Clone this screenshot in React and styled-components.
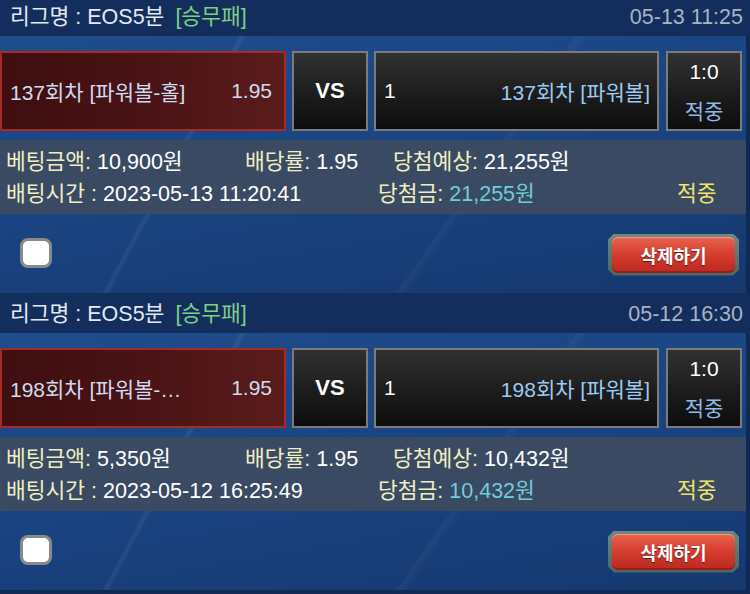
import React from "react";
import styled, { createGlobalStyle } from "styled-components";

const GlobalStyle = createGlobalStyle`
  body {
    margin: 0;
    background: #102a55;
    font-family: "Liberation Sans", "Noto Sans CJK KR", sans-serif;
    overflow: hidden;
  }
`;

const bets = [
  {
    id: 1,
    date: "05-13 11:25",
    pick: "137회차 [파워볼-홀]",
    odds: "1.95",
    home: "1",
    away: "137회차 [파워볼]",
    score: "1:0",
    amount: "10,900원",
    expected: "21,255원",
    time: "2023-05-13 11:20:41",
    won: "21,255원",
  },
  {
    id: 2,
    date: "05-12 16:30",
    pick: "198회차 [파워볼-…",
    odds: "1.95",
    home: "1",
    away: "198회차 [파워볼]",
    score: "1:0",
    amount: "5,350원",
    expected: "10,432원",
    time: "2023-05-12 16:25:49",
    won: "10,432원",
  },
];

export default function App() {
  return (
    <Page>
      <GlobalStyle />
      {bets.map((bet) => (
        <BetCard key={bet.id}>
          <Header>
            <League>
              리그명 : EOS5분 <GameType>[승무패]</GameType>
            </League>
            <DateText>{bet.date}</DateText>
          </Header>
          <Body>
            <MatchRow>
              <PickBox>
                <span>{bet.pick}</span>
                <span>{bet.odds}</span>
              </PickBox>
              <VsBox>VS</VsBox>
              <TeamBox>
                <span>{bet.home}</span>
                <AwayName>{bet.away}</AwayName>
              </TeamBox>
              <ScoreBox>
                <ScoreLine>{bet.score}</ScoreLine>
                <ScoreLine $result>적중</ScoreLine>
              </ScoreBox>
            </MatchRow>
            <InfoPanel>
              <InfoRow>
                <Cell $w={239}>
                  <Label>베팅금액:</Label> {bet.amount}
                </Cell>
                <Cell $w={148}>
                  <Label>배당률:</Label> {bet.odds}
                </Cell>
                <Cell>
                  <Label>당첨예상:</Label> {bet.expected}
                </Cell>
              </InfoRow>
              <InfoRow>
                <Cell $w={372}>
                  <Label>배팅시간 :</Label> {bet.time}
                </Cell>
                <Cell $w={299}>
                  <Label>당첨금:</Label> <WonValue>{bet.won}</WonValue>
                </Cell>
                <Cell>
                  <HitText>적중</HitText>
                </Cell>
              </InfoRow>
            </InfoPanel>
            <Footer>
              <CheckBox type="checkbox" />
              <DeleteFrame>
                <DeleteButton>삭제하기</DeleteButton>
              </DeleteFrame>
            </Footer>
          </Body>
        </BetCard>
      ))}
    </Page>
  );
}

const Page = styled.div`
  margin-top: -4px;
`;

const BetCard = styled.section`
  display: flex;
  flex-direction: column;
`;

const Header = styled.div`
  height: 40px;
  box-sizing: border-box;
  display: flex;
  align-items: flex-end;
  justify-content: space-between;
  padding: 0 7px 7px 10px;
  background: #132e5d;
  font-size: 21.5px;
  line-height: 24px;
`;

const League = styled.div`
  color: #e4e9f2;
`;

const GameType = styled.span`
  color: #7fcf83;
  margin-left: 5px;
`;

const DateText = styled.div`
  color: #a9b3c4;
`;

const Body = styled.div`
  width: 746px;
  padding-top: 15px;
  background:
    linear-gradient(118deg, transparent 27%, rgba(255, 255, 255, 0.07) 27.4%, transparent 28%),
    linear-gradient(125deg, transparent 62%, rgba(255, 255, 255, 0.04) 62.5%, transparent 63.5%),
    linear-gradient(170deg, #1f4c8c 0%, #1a4482 45%, #16386f 100%);
`;

const MatchRow = styled.div`
  display: flex;
  height: 80px;
  font-size: 21px;
`;

const PickBox = styled.div`
  width: 286px;
  box-sizing: border-box;
  display: flex;
  align-items: center;
  justify-content: space-between;
  padding: 0 12px 0 8px;
  border: 2px solid #a82a25;
  background: linear-gradient(90deg, #3e0e10 0%, #4a1315 50%, #5b1c1b 100%);
  color: #cfdbef;
  white-space: nowrap;
`;

const DarkBox = styled.div`
  box-sizing: border-box;
  border: 2px solid #7b7b7b;
  background: linear-gradient(180deg, #313131 0%, #1c1c1c 55%, #0d0d0d 100%);
  color: #ffffff;
`;

const VsBox = styled(DarkBox)`
  width: 76px;
  margin-left: 6px;
  display: flex;
  align-items: center;
  justify-content: center;
  font-weight: bold;
  font-size: 22px;
`;

const TeamBox = styled(DarkBox)`
  width: 285px;
  margin-left: 6px;
  display: flex;
  align-items: center;
  justify-content: space-between;
  padding: 0 7px 0 8px;
  white-space: nowrap;
`;

const AwayName = styled.span`
  color: #9ccaf2;
`;

const ScoreBox = styled(DarkBox)`
  width: 76px;
  margin-left: 7px;
  display: flex;
  flex-direction: column;
`;

const ScoreLine = styled.div`
  flex: 1;
  display: flex;
  align-items: center;
  justify-content: center;
  color: ${(p) => (p.$result ? "#8cbbe8" : "#ffffff")};
`;

const InfoPanel = styled.div`
  margin-top: 9px;
  height: 74px;
  box-sizing: border-box;
  padding: 3px 0 0 6px;
  background: #3a4a63;
  font-size: 21.5px;
  color: #ffffff;
`;

const InfoRow = styled.div`
  display: flex;
  height: 32px;
  align-items: center;
  white-space: nowrap;
`;

const Cell = styled.div`
  width: ${(p) => (p.$w ? `${p.$w}px` : "auto")};
  flex-shrink: 0;
`;

const Label = styled.span`
  color: #efeec2;
`;

const WonValue = styled.span`
  color: #72cbd9;
`;

const HitText = styled.span`
  color: #f1e46b;
`;

const Footer = styled.div`
  height: 79px;
  display: flex;
  align-items: center;
  justify-content: space-between;
  padding: 0 7px 2px 20px;
  box-sizing: border-box;
`;

const CheckBox = styled.input`
  appearance: none;
  margin: 0;
  width: 32px;
  height: 30px;
  box-sizing: border-box;
  border: 3px solid #8a8a8a;
  border-radius: 8px;
  background: #ffffff;
`;

const DeleteFrame = styled.div`
  width: 131px;
  height: 42px;
  box-sizing: border-box;
  padding: 3px 4px;
  margin-top: 4px;
  background: linear-gradient(180deg, #6f8884 0%, #4f6663 100%);
  clip-path: polygon(6px 0, calc(100% - 6px) 0, 100% 6px, 100% calc(100% - 6px), calc(100% - 6px) 100%, 6px 100%, 0 calc(100% - 6px), 0 6px);
`;

const DeleteButton = styled.button`
  width: 100%;
  height: 100%;
  border: 0;
  border-radius: 6px;
  padding: 0;
  background: linear-gradient(180deg, #e8644f 0%, #d63f30 45%, #bb271f 100%);
  box-shadow: inset 0 1px 0 rgba(255, 190, 170, 0.6), inset 0 -2px 0 rgba(120, 20, 15, 0.5);
  color: #ffffff;
  font-family: "Noto Sans CJK KR", sans-serif;
  font-weight: bold;
  font-size: 18px;
  text-shadow: 0 1px 1px #6a1410;
  cursor: pointer;
`;
